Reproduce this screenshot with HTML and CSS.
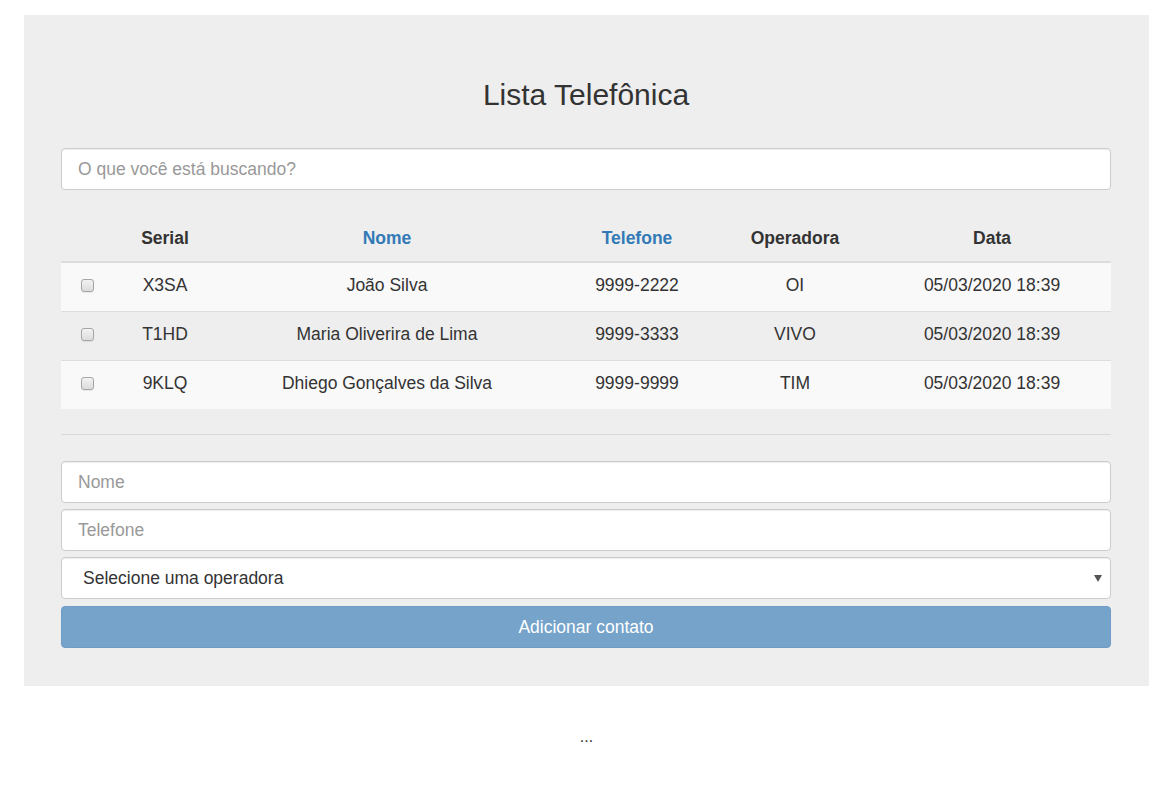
FILE: index.html
```html
<!DOCTYPE html>
<html lang="pt">
<head>
<meta charset="utf-8">
<title>Lista Telefônica</title>
<link rel="stylesheet" href="styles.css">
</head>
<body>
<div class="page">
  <div class="jumbotron">
    <h2 class="title">Lista Telefônica</h2>
    <input class="form-control search" type="text" placeholder="O que você está buscando?">
    <table class="table">
      <thead>
        <tr>
          <th class="c-check"></th>
          <th class="c-serial">Serial</th>
          <th class="c-nome"><a href="#">Nome</a></th>
          <th class="c-tel"><a href="#">Telefone</a></th>
          <th class="c-op">Operadora</th>
          <th class="c-data">Data</th>
        </tr>
      </thead>
      <tbody>
        <tr class="odd">
          <td><input class="check" type="checkbox"></td>
          <td>X3SA</td>
          <td>João Silva</td>
          <td>9999-2222</td>
          <td>OI</td>
          <td>05/03/2020 18:39</td>
        </tr>
        <tr>
          <td><input class="check" type="checkbox"></td>
          <td>T1HD</td>
          <td>Maria Oliverira de Lima</td>
          <td>9999-3333</td>
          <td>VIVO</td>
          <td>05/03/2020 18:39</td>
        </tr>
        <tr class="odd">
          <td><input class="check" type="checkbox"></td>
          <td>9KLQ</td>
          <td>Dhiego Gonçalves da Silva</td>
          <td>9999-9999</td>
          <td>TIM</td>
          <td>05/03/2020 18:39</td>
        </tr>
      </tbody>
    </table>
    <hr class="divider">
    <form class="form">
      <input class="form-control" type="text" placeholder="Nome">
      <input class="form-control" type="text" placeholder="Telefone">
      <div class="select-wrap">
        <select class="form-control select">
          <option>Selecione uma operadora</option>
        </select>
      </div>
      <button class="btn" type="button" disabled>Adicionar contato</button>
    </form>
  </div>
  <p class="dots">...</p>
</div>
</body>
</html>
```
FILE: styles.css
```css
* {
  box-sizing: border-box;
}

html, body {
  margin: 0;
  padding: 0;
  background: #fff;
}

body {
  font-family: "Liberation Sans", Arial, Helvetica, sans-serif;
  font-size: 17.5px;
  line-height: 24px;
  color: #333;
}

.page {
  padding: 15px 20px 0 24px;
}

.jumbotron {
  background: #eee;
  padding: 63px 38px 38px 37px;
}

.title {
  margin: 0;
  font-size: 30px;
  font-weight: 500;
  line-height: 33px;
  text-align: center;
  color: #333;
}

.form-control {
  display: block;
  width: 100%;
  height: 42px;
  padding: 6px 16px;
  font-family: inherit;
  font-size: 17.5px;
  color: #555;
  background: #fff;
  border: 1px solid #ccc;
  border-radius: 4px;
  box-shadow: inset 0 1px 1px rgba(0, 0, 0, 0.075);
  outline: none;
}

.form-control::placeholder {
  color: #999;
  opacity: 1;
}

.search {
  margin-top: 37px;
}

.table {
  width: 100%;
  margin-top: 22px;
  border-collapse: collapse;
  border-spacing: 0;
  table-layout: fixed;
}

.table th,
.table td {
  padding: 10px 8px 14px;
  line-height: 24px;
  text-align: center;
  vertical-align: middle;
}

.table th {
  padding: 14px 8px 11px;
  font-weight: bold;
  border-bottom: 2px solid #ddd;
}

.table th a {
  color: #337ab7;
  text-decoration: none;
}

.table td {
  border-top: 1px solid #ddd;
}

.table tbody tr:first-child td {
  border-top: 0;
}

.table tr.odd td {
  background: #f9f9f9;
}

.check {
  appearance: none;
  -webkit-appearance: none;
  display: inline-block;
  margin: 0;
  width: 13px;
  height: 13px;
  vertical-align: middle;
  position: relative;
  top: -1px;
  border: 1px solid #a6a6a6;
  border-radius: 3px;
  background: linear-gradient(#f2f2f2, #dcdcdc);
  box-shadow: 0 1px 1px rgba(0, 0, 0, 0.08);
}

.c-check { width: 52px; }
.c-serial { width: 104px; }
.c-nome { width: 340px; }
.c-tel { width: 160px; }
.c-op { width: 156px; }
.c-data { width: 238px; }

.divider {
  margin: 25px 0 26px;
  border: 0;
  border-top: 1px solid #d8d8d8;
}

.form {
  display: flex;
  flex-direction: column;
  gap: 6px;
}

.select-wrap {
  position: relative;
}

.select-wrap::after {
  content: "";
  position: absolute;
  right: 9px;
  top: 18px;
  width: 0;
  height: 0;
  border-left: 4px solid transparent;
  border-right: 4px solid transparent;
  border-top: 7px solid #555;
  pointer-events: none;
}

.select {
  appearance: none;
  -webkit-appearance: none;
  padding: 6px 30px 6px 21px;
  color: #333;
}

.btn {
  display: block;
  width: 100%;
  height: 42px;
  margin-top: 1px;
  padding: 6px 12px;
  font-family: inherit;
  font-size: 17.5px;
  color: #fff;
  background: #75a3ca;
  border: 1px solid #6e9cc6;
  border-radius: 4px;
  text-align: center;
}

.dots {
  margin: 39px 0 0;
  text-align: center;
  font-size: 16px;
  line-height: 24px;
}
```
